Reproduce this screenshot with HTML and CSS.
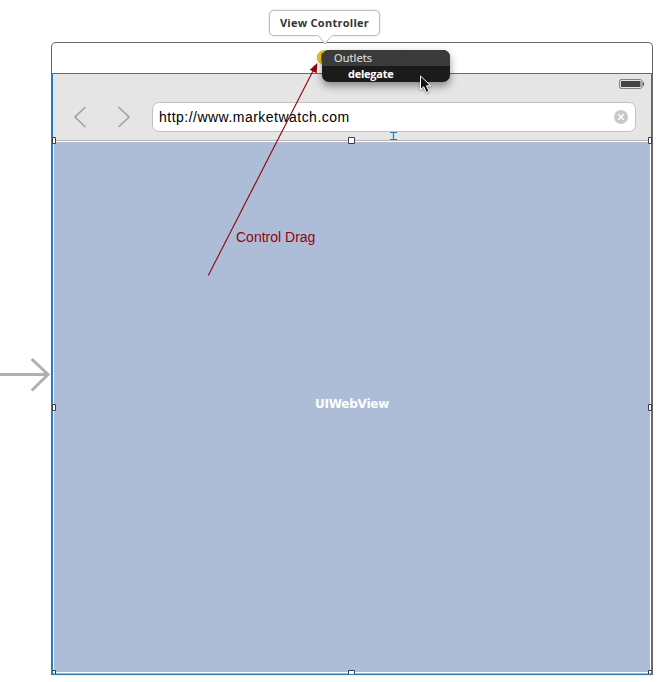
FILE: index.html
```
<!DOCTYPE html>
<html lang="en">
<head>
<meta charset="utf-8">
<title>Storyboard</title>
<link rel="stylesheet" href="styles.css">
</head>
<body>
<main class="canvas">
  <section class="scene">
    <header class="dock"></header>
    <div class="screen">
      <div class="toolbar">
        <div class="status">
          <svg width="26" height="10" viewBox="0 0 26 10"><rect x=".6" y=".6" width="22.4" height="8.8" rx="1.5" fill="#eee" stroke="#777"/><rect x="2" y="2" width="19.5" height="6" fill="#444"/><path d="M23.7 3q1.5 0 1.5 2t-1.5 2z" fill="#555"/></svg>
        </div>
        <div class="nav">
          <svg class="arrows" width="56" height="22" viewBox="0 0 56 22" fill="none" stroke="#a3a3a3" stroke-width="1.7"><path d="M11.4 1L1 11l10.4 10M44.5 1L55 11 44.5 21"/></svg>
          <div class="field"><span class="url">http://www.marketwatch.com</span>
            <svg width="14" height="14" viewBox="0 0 14 14"><circle cx="7" cy="7" r="7" fill="#c8c8c8"/><path d="M4.3 4.3l5.4 5.4m0-5.4L4.3 9.7" stroke="#fff" stroke-width="1.5"/></svg>
          </div>
        </div>
      </div>
      <div class="webview"><span class="webname">UIWebView</span></div>
    </div>
  </section>

  <svg class="overlay" width="661" height="682" viewBox="0 0 661 682">
    <path d="M0 374.5H48M31.7 359L48 374.5 31.7 390.5" fill="none" stroke="#b0b0b0" stroke-width="3"/>
    <path d="M390 132.5h7M390 139.5h7M393.5 132v8" stroke="#267dbd" stroke-width="1.2" fill="none"/>
    <g fill="#fff" stroke="#3c3c3c">
      <path d="M52.5 137.5h3v6h-3zM348.5 137.5h6v6h-6zM648.5 137.5h3v6h-3zM52.5 404.5h3v6h-3zM648.5 404.5h3v6h-3z"/>
      <path d="M52 670.5h3.5V674M348.500 674v-3.500h6V674M648.500 674v-3.500H652"/>
    </g>
    <circle cx="324" cy="57.5" r="6.7" fill="#f7c61a" stroke="#dfae12"/>
    <path d="M326 53.5h-4.500v8h4.500" fill="none" stroke="#8f6d0c"/>
    <path d="M208.3 275.5L314 69" stroke="#980009" stroke-width="1.1"/>
    <path d="M317.3 63L316.7 73.2 309.8 69.700z" fill="#980009"/>
  </svg>
  <div class="drag-label">Control Drag</div>

  <div class="tooltip">View Controller
    <svg class="tip" width="16" height="12" viewBox="0 0 16 12"><path d="M1 0L8 9 15 0" fill="#fff" stroke="#bbb"/><path d="M1 0h14" stroke="#fff" stroke-width="2"/></svg>
  </div>
  <div class="menu">
    <div class="menu-title"><span>Outlets</span><i class="ghost"></i></div>
    <div class="menu-item"><span>delegate</span></div>
  </div>
  <svg class="cursor" width="14" height="20" viewBox="0 0 14 20"><path d="M1.500 1v13.500l3.200-2.800 2.700 5.800 2.700-1.200-2.600-5.500h4.200z" fill="#111" stroke="#fff"/></svg>
</main>
</body>
</html>
```
FILE: styles.css
```
* { box-sizing: border-box; }
body { margin: 0; background: #fff; }
svg { display: block; flex: none; }
.canvas { position: relative; width: 661px; height: 682px; overflow: hidden; padding: 42px 8px 7px 51px; }
.scene { height: 633px; width: 602px; border: 1px solid #696969; border-bottom: 0; border-radius: 5px 5px 0 0; display: flex; flex-direction: column; }
.dock { height: 31px; flex: none; border-bottom: 1px solid #696969; }
.screen { flex: 1; display: flex; flex-direction: column; border: solid #267dbd; border-width: 0 1px 1px; }
.toolbar { height: 67px; flex: none; background: #e5e5e5; border-bottom: 1px solid #b5b5b5; }
.status { height: 28px; display: flex; justify-content: flex-end; padding: 5px 6px 0 0; }
.nav { display: flex; align-items: center; padding: 0 15px 0 21px; gap: 22px; }
.field { flex: 1; height: 30px; border: 1px solid #c1c1c1; border-radius: 7px; background: #fff; display: flex; align-items: center; justify-content: space-between; padding: 0 7px 0 6px; }
.url { font: 14px/16px "Liberation Sans", Arial, sans-serif; letter-spacing: .48px; color: #000; }
.webview { flex: 1; background: #adbdd8; border: 1px solid #fff; box-shadow: 0 1px #b5b5b5; margin-bottom: 1px; display: flex; align-items: center; justify-content: center; }
.webname { font: bold 12px/16px "DejaVu Sans", sans-serif; color: #fff; letter-spacing: -.22px; position: relative; top: -3px; }
.overlay { position: absolute; left: 0; top: 0; }
.drag-label { position: absolute; left: 236px; top: 229px; font: 14px/16px "Liberation Sans", Arial, sans-serif; color: #980009; white-space: nowrap; }
.tooltip { position: absolute; left: 269px; top: 10px; width: 111px; height: 26px; border: 1px solid #bebebe; border-radius: 5px; background: #fff; box-shadow: 0 0 2px #ccc; color: #333; font: bold 11px/24px "Open Sans", sans-serif; letter-spacing: .27px; text-align: center; white-space: nowrap; }
.tip { position: absolute; left: 47px; top: 24px; }
.menu { position: absolute; left: 322px; top: 50px; width: 128px; height: 32px; border-radius: 7px; overflow: hidden; background: #1b1b1b; box-shadow: 0 4px 9px rgba(0,0,0,.42); font: 11px/16px "Open Sans", sans-serif; }
.menu-title { height: 16px; background: #3b3b3b; color: #ddd; padding-left: 12px; display: flex; align-items: center; gap: 23px; letter-spacing: .1px; -webkit-text-stroke: .2px #ddd; }
.ghost { width: 11px; height: 10px; border: 1px solid #44352f; border-radius: 2px; }
.menu-item { height: 16px; color: #fff; font-weight: bold; padding-left: 26px; letter-spacing: -.25px; }
.cursor { position: absolute; left: 419px; top: 75px; filter: drop-shadow(0 1px 1px rgba(0,0,0,.35)); }
```
